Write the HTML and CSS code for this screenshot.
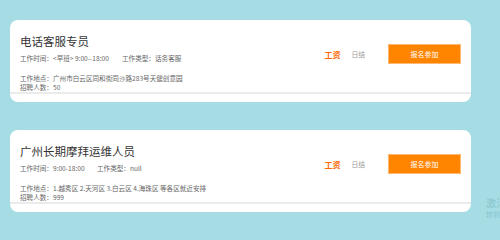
FILE: index.html
```html
<!DOCTYPE html>
<html lang="zh">
<head>
<meta charset="utf-8">
<link rel="stylesheet" href="styles.css">
</head>
<body>
<div class="list">
  <div class="card">
    <div class="main">
      <div class="info">
        <div class="title">电话客服专员</div>
        <div class="row"><span class="col1">工作时间：&lt;早班&gt; 9:00--18:00</span><span>工作类型：话务客服</span></div>
        <div class="row gap">工作地点：广州市白云区同和街同沙路283号天健创意园</div>
        <div class="row">招聘人数：50</div>
      </div>
      <div class="side">
        <span class="pay">工资</span>
        <span class="term">日结</span>
        <button class="apply">报名参加</button>
      </div>
    </div>
  </div>
  <div class="card">
    <div class="main">
      <div class="info">
        <div class="title">广州长期摩拜运维人员</div>
        <div class="row"><span class="col1 short">工作时间：9:00-18:00</span><span>工作类型：null</span></div>
        <div class="row gap">工作地点：1.越秀区 2.天河区 3.白云区 4.海珠区 等各区就近安排</div>
        <div class="row">招聘人数：999</div>
      </div>
      <div class="side">
        <span class="pay">工资</span>
        <span class="term">日结</span>
        <button class="apply">报名参加</button>
      </div>
    </div>
  </div>
</div>
<div class="watermark">
  <div class="wm1">激活</div>
  <div class="wm2">转到</div>
</div>
</body>
</html>
```
FILE: styles.css
```css
html, body {
  margin: 0;
  padding: 0;
}
body {
  background: #a6dde4;
  width: 500px;
  height: 222px;
  overflow: hidden;
  position: relative;
  font-family: "Noto Sans CJK SC", "Noto Sans", sans-serif;
}
.list {
  padding: 20px 0 0 10px;
  display: flex;
  flex-direction: column;
  gap: 28px;
}
.card {
  width: 461px;
  background: #fff;
  border-radius: 8px;
  padding-bottom: 8px;
  box-sizing: border-box;
}
.main {
  display: flex;
  justify-content: space-between;
  border-bottom: 2px solid #ebebeb;
}
.info {
  padding: 14px 0 0 10px;
}
.title {
  font-size: 11.5px;
  line-height: 14px;
  color: #333;
  margin-bottom: 6px;
}
.row {
  font-size: 6.6px;
  line-height: 9px;
  color: #666;
  white-space: nowrap;
}
.row.gap {
  margin-top: 11px;
}
.col1 {
  display: inline-block;
  width: 102px;
}
.col1.short {
  width: 77px;
}
.side {
  display: flex;
  align-items: center;
  height: 20px;
  padding: 24px 10px 0 0;
}
.pay {
  font-size: 8px;
  font-weight: bold;
  color: #ff6a00;
}
.term {
  font-size: 6.8px;
  color: #999;
  margin-left: 11px;
}
.apply {
  margin-left: 23px;
  width: 73px;
  height: 20px;
  padding: 0;
  background: #ff8400;
  border: 1px solid #ffb870;
  color: #fff;
  font-family: inherit;
  font-size: 7px;
  line-height: 18px;
}
.watermark {
  position: absolute;
  left: 486px;
  top: 197px;
  width: 14px;
  color: #86c4cd;
  white-space: nowrap;
  overflow: hidden;
}
.wm1 {
  font-size: 10px;
  line-height: 12px;
}
.wm2 {
  font-size: 7px;
  line-height: 10px;
}
```
